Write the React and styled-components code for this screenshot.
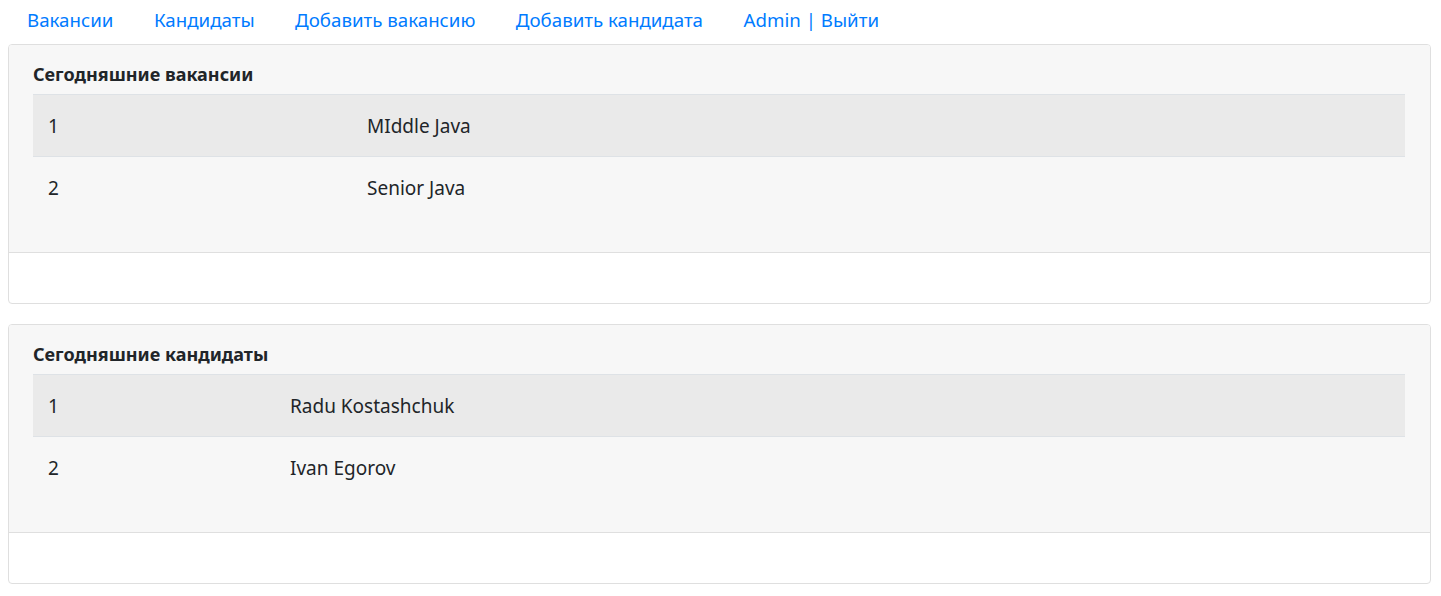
import React from "react";
import styled, { createGlobalStyle } from "styled-components";

const Global = createGlobalStyle`
  html, body { margin: 0; padding: 0; background: #fff; }
  body {
    font-family: "Noto Sans", "Open Sans", sans-serif;
    color: #212529;
  }
`;

const Nav = styled.nav`
  display: flex;
  align-items: center;
  height: 40px;
  padding-left: 7px;
`;

const NavLink = styled.a`
  color: #007bff;
  text-decoration: none;
  font-size: 18.7px;
  padding: 0 20.5px 0 20px;
  line-height: 40px;
`;

const Page = styled.main`
  display: flex;
  flex-direction: column;
  gap: 20px;
  padding: 4px 10px 0 8px;
`;

const Card = styled.section`
  border: 1px solid #dfdfdf;
  border-radius: 4px;
  overflow: hidden;
  background: #fff;
`;

const CardHeader = styled.div`
  background: #f7f7f7;
  border-bottom: 1px solid #dfdfdf;
  padding: 15px 25px 34px 24px;
`;

const Title = styled.h5`
  margin: 0 0 5px 0;
  font-size: 18px;
  font-weight: 700;
  line-height: 29px;
`;

const Table = styled.table`
  width: 100%;
  border-collapse: collapse;
  font-size: 19px;
`;

const Row = styled.tr`
  background: ${(p) => (p.$striped ? "#eaeaea" : "transparent")};
`;

const Cell = styled.td`
  border-top: 1px solid #dee2e6;
  padding: 0 15px;
  height: 61px;
  vertical-align: middle;
  width: ${(p) => p.$w || "auto"};
`;

const CardBody = styled.div`
  height: 50px;
`;

const vacancies = [
  { id: 1, name: "MIddle Java" },
  { id: 2, name: "Senior Java" },
];
const candidates = [
  { id: 1, name: "Radu Kostashchuk" },
  { id: 2, name: "Ivan Egorov" },
];

function DataCard({ title, rows, firstCol }) {
  return (
    <Card>
      <CardHeader>
        <Title>{title}</Title>
        <Table>
          <tbody>
            {rows.map((r, i) => (
              <Row key={r.id} $striped={i % 2 === 0}>
                <Cell $w={firstCol}>{r.id}</Cell>
                <Cell>{r.name}</Cell>
              </Row>
            ))}
          </tbody>
        </Table>
      </CardHeader>
      <CardBody />
    </Card>
  );
}

export default function App() {
  return (
    <>
      <Global />
      <Nav>
        <NavLink href="#">Вакансии</NavLink>
        <NavLink href="#">Кандидаты</NavLink>
        <NavLink href="#">Добавить вакансию</NavLink>
        <NavLink href="#">Добавить кандидата</NavLink>
        <NavLink href="#">Admin | Выйти</NavLink>
      </Nav>
      <Page>
        <DataCard title="Сегодняшние вакансии" rows={vacancies} firstCol="289px" />
        <DataCard title="Сегодняшние кандидаты" rows={candidates} firstCol="212px" />
      </Page>
    </>
  );
}
